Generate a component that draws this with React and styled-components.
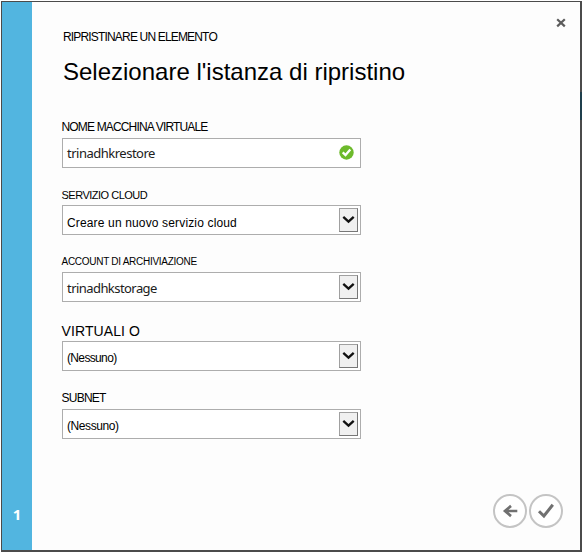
import React from "react";
import styled, { createGlobalStyle } from "styled-components";

const GlobalStyle = createGlobalStyle`
  * { box-sizing: border-box; }
  body { margin: 0; background: #fff; font-family: "Liberation Sans", Arial, sans-serif; color: #000; }
`;

const Page = styled.div`
  width: 583px;
  height: 553px;
  padding: 1px;
  overflow: hidden;
`;

const Dialog = styled.main`
  display: flex;
  width: 581px;
  height: 551px;
  border: solid #4b4b4b;
  border-width: 1px 0 2px 1px;
  background: #fdfdfd;
`;

const StepRail = styled.aside`
  display: flex;
  flex: none;
  align-items: flex-end;
  justify-content: center;
  width: 30px;
  padding-bottom: 26px;
  background: #52b5e0;
  color: #fff;
  font: bold 15px/20px "Noto Sans", sans-serif;
`;

const RightEdge = styled.div`
  flex: none;
  width: 2px;
  background: linear-gradient(#4b4b4b 90px, #1f3f4c 90px, #1f3f4c 118px, #4b4b4b 118px);
`;

const Content = styled.div`
  display: flex;
  flex: 1;
  flex-direction: column;
  padding: 14px 14px 22px 30px;
`;

const TopBar = styled.header`
  display: flex;
  justify-content: space-between;
  height: 40px;
`;

const Text = styled.span`
  display: block;
  font-size: ${(p) => p.$size}px;
  line-height: 20px;
  letter-spacing: ${(p) => p.$track || 0}px;
  white-space: nowrap;
`;

const Eyebrow = styled(Text)`
  padding: 11px 0 0 1px;
`;

const CloseButton = styled.button`
  width: 10px;
  height: 12px;
  padding: 0;
  border: 0;
  background: none;
  line-height: 0;
`;

const Title = styled.h1`
  margin: 0 0 0 1px;
  height: 61px;
  font-size: 24px;
  font-weight: 400;
  line-height: 32px;
  white-space: nowrap;
`;

const Form = styled.form`
  display: flex;
  flex-direction: column;
`;

const Field = styled.label`
  display: flex;
  flex-direction: column;
  justify-content: flex-end;
  width: 299px;
  height: ${(p) => p.$height}px;
`;

const Label = styled(Text)`
  height: ${(p) => p.$gap}px;
  margin-left: -0.5px;
`;

const Control = styled.span`
  display: flex;
  flex: none;
  align-items: center;
  justify-content: space-between;
  height: 30px;
  padding: 0 2px 0 4px;
  border: 1px solid #adadad;
  background: #fff;
`;

const Value = styled(Text)`
  padding-top: ${(p) => p.$drop}px;
  color: ${(p) => (p.$humanist ? "#202020" : "#000")};
  font-family: ${(p) => (p.$humanist ? '"Noto Sans", sans-serif' : "inherit")};
`;

const ArrowBox = styled.span`
  display: flex;
  align-items: center;
  justify-content: center;
  width: 19px;
  height: 24px;
  border: 1px solid #a0a0a0;
  border-right-color: #777;
  border-bottom-color: #777;
  background: #f0f0f0;
`;

const ValidIcon = styled.svg`
  margin: 0 4px 2px 0;
`;

const Actions = styled.footer`
  display: flex;
  justify-content: flex-end;
  gap: 2px;
  margin-top: auto;
  padding-right: 3px;
`;

const RoundButton = styled.button`
  display: flex;
  align-items: center;
  justify-content: center;
  width: 34px;
  height: 34px;
  padding: 0;
  border: 2px solid #c4c4c4;
  border-radius: 50%;
  background: #fff;
`;

const fields = [
  { label: "NOME MACCHINA VIRTUALE", size: 12, track: -0.84, gap: 21, height: 51, value: "trinadhkrestore", vSize: 13, vTrack: -0.5, drop: 0, humanist: true, valid: true },
  { label: "SERVIZIO CLOUD", size: 11, track: -0.5, gap: 20, height: 67, value: "Creare un nuovo servizio cloud", vSize: 12, vTrack: 0.15, drop: 6 },
  { label: "ACCOUNT DI ARCHIVIAZIONE", size: 10, track: -0.28, gap: 20, height: 67, value: "trinadhkstorage", vSize: 13, vTrack: -0.56, drop: 2, humanist: true },
  { label: "VIRTUALI O", size: 14, track: 0.1, gap: 20, height: 69, value: "(Nessuno)", vSize: 12, vTrack: -0.65, drop: 4 },
  { label: "SUBNET", size: 12, track: -0.75, gap: 21, height: 68, value: "(Nessuno)", vSize: 12, vTrack: -0.42, drop: 3 },
];

function FormField({ field }) {
  return (
    <Field $height={field.height}>
      <Label $size={field.size} $track={field.track} $gap={field.gap}>{field.label}</Label>
      <Control>
        <Value $size={field.vSize} $track={field.vTrack} $drop={field.drop} $humanist={field.humanist}>
          {field.value}
        </Value>
        {field.valid ? (
          <ValidIcon width="15" height="15" viewBox="0 0 15 15">
            <circle cx="7.5" cy="7.5" r="7.2" fill="#6dba2c" />
            <path d="M3.7 7.4 6.5 10.1 11.3 4.6" fill="none" stroke="#fff" strokeWidth="2.3" />
          </ValidIcon>
        ) : (
          <ArrowBox>
            <svg width="13" height="10" viewBox="0 0 13 10">
              <path d="M1.3 1.8 6.5 6.7 11.7 1.8" fill="none" stroke="#111" strokeWidth="2.3" />
            </svg>
          </ArrowBox>
        )}
      </Control>
    </Field>
  );
}

export default function App() {
  return (
    <>
      <GlobalStyle />
      <Page>
        <Dialog>
          <StepRail>1</StepRail>
          <Content>
            <TopBar>
              <Eyebrow $size={12} $track={-0.83}>RIPRISTINARE UN ELEMENTO</Eyebrow>
              <CloseButton type="button" aria-label="Chiudi">
                <svg width="10" height="12" viewBox="0 0 10 12">
                  <path d="M1.2 3.2 8.8 10.4M8.8 3.2 1.2 10.4" fill="none" stroke="#5c5c5c" strokeWidth="2.2" />
                </svg>
              </CloseButton>
            </TopBar>
            <Title>Selezionare l'istanza di ripristino</Title>
            <Form>
              {fields.map((field) => (
                <FormField key={field.label} field={field} />
              ))}
            </Form>
            <Actions>
              <RoundButton type="button" aria-label="Indietro">
                <svg width="18" height="16" viewBox="0 0 18 16">
                  <path d="M16.3 8H4M10 2.9 4 8l6 5.1" fill="none" stroke="#707070" strokeWidth="2.7" />
                </svg>
              </RoundButton>
              <RoundButton type="button" aria-label="Conferma">
                <svg width="18" height="16" viewBox="0 0 18 16">
                  <path d="M2 8.2 6.9 13 15.8 1.8" fill="none" stroke="#707070" strokeWidth="3" />
                </svg>
              </RoundButton>
            </Actions>
          </Content>
          <RightEdge />
        </Dialog>
      </Page>
    </>
  );
}
